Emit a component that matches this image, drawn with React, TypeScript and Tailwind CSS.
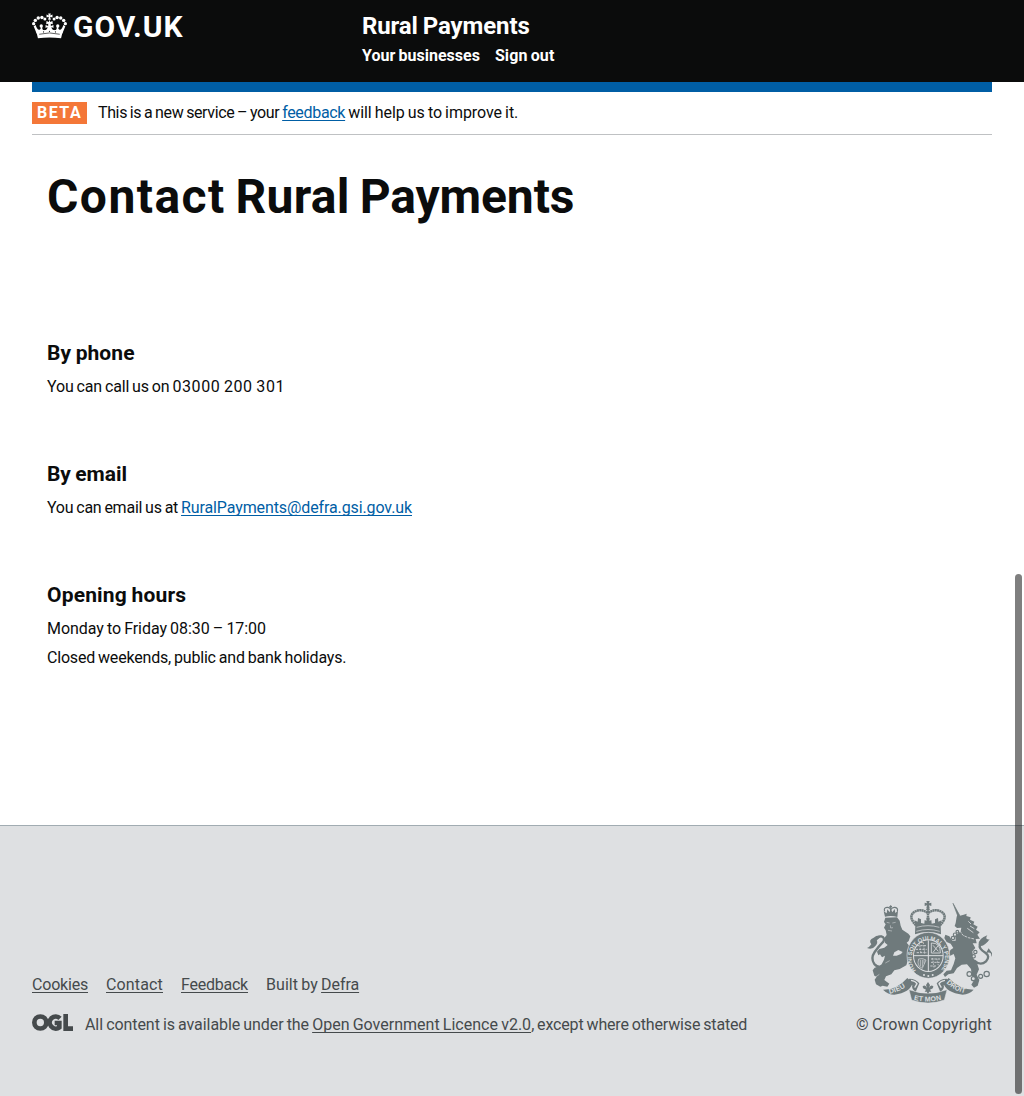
import type { ReactNode } from "react";

function Crown() {
  return (
    <svg viewBox="24 26 106 78" className="h-[26px] w-[35px] shrink-0" fill="#fff" aria-hidden="true">
      <path d="M37 82 Q77 72 117 82 L112 102 Q77 97 42 102 Z" />
      <path d="M38 88 L29 66 L35 62 Q40 78 47 76 Q53 73 49 65 L55 67 Q54 77 61 78 Q71 77 71 68 L65 71 L65 62 L73 65 L73 58 L67 60 L68 50 L75 53 L77 45 L79 53 L86 50 L87 60 L81 58 L81 65 L89 62 L89 71 L83 68 Q83 77 93 78 Q100 77 99 67 L105 65 Q101 73 107 76 Q114 78 119 62 L125 66 L116 88 Z" />
      <path d="M73 27 H81 L79 33 L86 30 V39 L79 37 L81 46 H73 L75 37 L68 39 V30 L75 33 Z" />
      <circle cx="29" cy="58" r="5" />
      <circle cx="34" cy="48" r="5.2" />
      <circle cx="43" cy="41" r="5.2" />
      <circle cx="54" cy="39" r="5.2" />
      <circle cx="63" cy="44" r="4.6" />
      <circle cx="91" cy="44" r="4.6" />
      <circle cx="100" cy="39" r="5.2" />
      <circle cx="111" cy="41" r="5.2" />
      <circle cx="120" cy="48" r="5.2" />
      <circle cx="125" cy="58" r="5" />
      <circle cx="52" cy="65" r="5" />
      <circle cx="102" cy="65" r="5" />
      <path d="M46 90 Q77 82 108 90" stroke="#0b0c0c" strokeWidth="2" fill="none" />
      <g fill="#0b0c0c">
        <circle cx="59" cy="83" r="1.8" />
        <circle cx="77" cy="81" r="1.8" />
        <circle cx="95" cy="83" r="1.8" />
      </g>
    </svg>
  );
}

function OglLogo() {
  return (
    <svg viewBox="24 147 123 51" className="h-[17px] w-[41px] shrink-0" fill="none" stroke="#454a4c" aria-hidden="true">
      <circle cx="49" cy="172.500" r="18" strokeWidth="14" />
      <path d="M108 160 A18 18 0 1 0 106 187 V174 H92" strokeWidth="14" />
      <path d="M125 147 V191 H147" strokeWidth="14" />
    </svg>
  );
}

function CoatOfArms() {
  const ink = "#6f7a7c";
  const paper = "#dee0e2";
  return (
    <svg viewBox="21 18 375 306" className="h-[102px] w-[125px] [word-spacing:0]" fill={ink} aria-hidden="true">
      {/* lion */}
      <path d="M75 65 L71 49 L80 55 L82 43 L89 52 L92 40 L97 52 L104 42 L106 54 L114 47 L112 66 Q94 61 75 65 Z" />
      <g fill="none" stroke={ink} strokeWidth="3.500">
        <path d="M74 49 Q70 38 81 37 Q90 36 92 44 Q96 36 105 37 Q115 39 112 49" />
        <path d="M92 31 V40 M88 35 H96" />
      </g>
      <path d="M76 68 L111 67 L119 77 L122 92 L127 104 L145 116 L151 124 L146 138 L140 143 L149 154 L142 166 L145 191 L139 211 L119 222 L103 226 L94 238 L78 244 L73 255 L88 266 L82 275 L68 272 L61 275 L48 268 L44 254 L50 245 L43 242 L38 226 L44 218 L57 214 L65 208 L72 194 L75 182 L66 187 L60 178 L55 181 L51 170 L58 162 L73 158 L83 150 L75 143 L73 129 L80 120 L77 106 L72 98 L77 88 L72 81 Z" />
      <path d="M76 211 Q55 222 43 207 Q31 190 44 171 Q56 154 70 140 Q76 128 64 124 Q50 123 44 141" fill="none" stroke={ink} strokeWidth="7" />
      <path d="M66 123 Q51 119 41 128 Q24 134 34 148 Q29 156 21 159 Q37 165 46 153 Q55 144 50 136 Z" />
      <g fill="none" stroke={paper} strokeWidth="1.500">
        <path d="M80 82 L89 84 M97 84 L107 82 M91 91 L92 99 L99 98 M84 106 L96 108" />
        <path d="M76 204 L89 197 M48 245 L58 238" />
      </g>
      <path d="M103 172 L115 165 L128 171 L123 177 L110 182 L99 182 Z" fill={paper} />

      {/* unicorn */}
      <path d="M279 25 L299 61 L294 65 Z" stroke={ink} strokeWidth="2" />
      <path d="M290 65 L294 56 L300 62 L311 59 L320 56 L319 63 L332 67 L330 74 L343 80 L340 88 L353 95 L348 104 L359 112 L352 119 L360 131 L347 132 L350 145 L338 145 L346 159 L337 169 L340 190 L351 204 L357 223 L350 239 L358 255 L353 272 L342 278 L334 269 L342 256 L335 240 L333 222 L321 208 L305 209 L291 219 L281 235 L265 238 L255 246 L250 238 L260 227 L273 226 L281 207 L286 190 L281 177 L271 182 L265 176 L272 164 L280 159 L272 146 L260 141 L253 129 L256 119 L268 124 L277 137 L287 137 L286 122 L302 109 L304 98 L291 99 L284 93 L287 84 Z" />
      <path d="M342 196 Q361 214 378 199 Q392 184 376 173 Q355 160 360 149 Q365 139 382 136" fill="none" stroke={ink} strokeWidth="7" />
      <path d="M356 151 Q354 131 382 121 Q373 135 389 133 Q375 152 363 153 Z M378 174 Q396 168 394 186 L398 177 L386 160 Z" />
      <g fill="none" stroke={paper} strokeWidth="2.500">
        <path d="M299 107 L309 121 L325 128 L343 132" strokeDasharray="8 3" />
        <path d="M330 93 L343 101 M322 100 L340 113 M325 79 L333 87" />
      </g>
      <g fill={paper} stroke={ink} strokeWidth="3.500">
        <circle cx="285" cy="119" r="5" />
        <circle cx="279" cy="129" r="5" />
        <circle cx="292" cy="110" r="4" />
        <circle cx="346" cy="171" r="5" />
        <circle cx="341" cy="184" r="5" />
        <circle cx="328" cy="237" r="7" />
        <circle cx="340" cy="251" r="6" />
        <circle cx="362" cy="244" r="6" />
        <circle cx="380" cy="237" r="8" />
      </g>

      {/* royal crown */}
      <path d="M199 18 H209 L207 25 L214 23 V33 L207 31 L209 40 H199 L201 31 L194 33 V23 L201 25 Z" />
      <circle cx="204" cy="43" r="5" />
      <g fill="none" stroke={ink} strokeWidth="7.500" strokeDasharray="6 1">
        <path d="M168 91 Q145 67 160 53 Q180 38 202 53" />
        <path d="M240 91 Q263 67 248 53 Q228 38 206 53" />
        <path d="M204 48 V84" />
      </g>
      <path d="M166 90 L163 76 L173 80 L174 69 L183 73 L183 84 L193 86 L194 75 L200 78 L199 68 H209 L208 78 L214 75 L215 86 L225 84 L225 73 L234 69 L235 80 L245 76 L242 90 L243 118 Q204 104 165 118 Z" />
      <g fill="none" stroke={paper} strokeWidth="2">
        <path d="M170 97 Q204 87 238 97 M169 109 Q204 98 239 109" />
      </g>

      {/* garter and shield */}
      <ellipse cx="205" cy="181" rx="64" ry="69" stroke={paper} strokeWidth="2" />
      <ellipse cx="205" cy="182" rx="46" ry="49" fill={paper} />
      <ellipse cx="205" cy="182" rx="43" ry="46" />
      <g fill="none" stroke={paper}>
        <path d="M205 136 V230 M161 182 H249" strokeWidth="3" />
        <path d="M171 152 H200 M167 163 H200 M170 173 H201 M213 192 H241 M213 202 H239 M211 213 H231" strokeWidth="2.500" strokeDasharray="7 3" />
        <path d="M178 144 L183 174 M190 142 L194 176 M218 189 L222 218 M230 191 L235 211" strokeWidth="2" strokeDasharray="5 3" />
        <path d="M214 144 Q242 143 241 174 H214 Z M219 151 L235 169 M235 151 L220 171" strokeWidth="2.500" />
        <path d="M176 192 Q169 213 187 220 L198 195 Q188 188 176 192 M181 195 V214 M187 194 V216 M192 195 V206" strokeWidth="2" />
      </g>
      <path id="garter-text" d="M168 226 A50 54 0 1 1 242 226" fill="none" />
      <text fill={paper} className="font-['Liberation_Sans'] text-[18px] font-bold">
        <textPath href="#garter-text" textLength="240" lengthAdjust="spacingAndGlyphs">HONI SOIT QUI MAL Y PENSE</textPath>
      </text>
      <g fill={paper}>
        <circle cx="192" cy="240" r="3" />
        <circle cx="205" cy="243" r="3" />
        <circle cx="218" cy="240" r="3" />
      </g>

      {/* motto ribbon */}
      <path d="M148 251 Q168 251 178 265 L167 291 Q153 280 157 270 L143 262 Z M260 251 Q240 251 230 265 L241 291 Q255 280 251 270 L265 262 Z" />
      <path d="M153 256 Q166 258 171 266 L164 278 M255 256 Q242 258 237 266 L244 278" fill="none" stroke={paper} strokeWidth="4" />
      <path d="M69 284 Q111 285 142 249 L158 264 Q150 293 103 299 Q84 299 69 284 Z" />
      <path d="M341 284 Q297 283 266 249 L250 264 Q258 293 308 299 Q328 298 341 284 Z" />
      <path d="M147 284 Q204 306 261 284 L253 315 Q204 333 155 315 Z" stroke={paper} strokeWidth="1.500" />
      <path d="M204 261 L210 270 L207 279 Q212 267 220 274 Q220 282 210 284 L214 290 L208 290 L204 297 L200 290 L194 290 L198 284 Q188 282 188 274 Q196 267 201 279 L198 270 Z" />
      <path id="ribbon-left" d="M88 296 Q126 289 151 264" fill="none" />
      <path id="ribbon-mid" d="M161 314 Q204 325 250 313" fill="none" />
      <path id="ribbon-right" d="M259 264 Q284 290 326 297" fill="none" />
      <g fill={paper} className="font-['Liberation_Sans'] text-[21px] font-bold">
        <text>
          <textPath href="#ribbon-left" textLength="53">DIEU</textPath>
        </text>
        <text>
          <textPath href="#ribbon-mid" textLength="84">ET MON</textPath>
        </text>
        <text>
          <textPath href="#ribbon-right" textLength="64" lengthAdjust="spacingAndGlyphs">DROIT</textPath>
        </text>
      </g>
    </svg>
  );
}

function Link({ children, className = "" }: { children: ReactNode; className?: string }) {
  return (
    <a href="#" className={`underline decoration-1 underline-offset-2 [text-decoration-skip-ink:none] ${className}`}>
      {children}
    </a>
  );
}

function Section({ title, titleClass, children }: { title: string; titleClass: string; children: ReactNode }) {
  return (
    <section className="mb-[61px]">
      <h2 className={`mb-2 text-[21px] leading-7 font-bold ${titleClass}`}>{title}</h2>
      <div className="flex flex-col gap-[5px]">{children}</div>
    </section>
  );
}

export default function App() {
  return (
    <div className="flex h-[1096px] w-full flex-col bg-white font-[Roboto,sans-serif] text-base leading-6 text-[#0b0c0c] [word-spacing:-0.8px]">
      <header className="flex h-[82px] shrink-0 bg-[#0b0c0c] px-8 font-bold text-white">
        <div className="flex w-[330px] items-start gap-[6px] pt-[13px]">
          <Crown />
          <span className="text-[30px] leading-7 tracking-[0.950px]">GOV.UK</span>
        </div>
        <div className="pt-[11px]">
          <div className="text-2xl leading-[30px] tracking-[-0.120px]">Rural Payments</div>
          <nav className="mt-[3px] flex gap-[15px]">
            <a href="#" className="tracking-[0.010px]">Your businesses</a>
            <a href="#" className="tracking-[0.090px]">Sign out</a>
          </nav>
        </div>
      </header>

      <div className="mx-8 shrink-0">
        <div className="h-[10px] bg-[#005ea5]" />
        <div className="flex h-[43px] items-start border-b border-[#bfc1c3] pt-[10px]">
          <strong className="mr-[11px] h-[22px] w-[55px] bg-[#f47738] pl-[5px] leading-[21px] tracking-[1.500px] text-white">BETA</strong>
          <p className="-mt-[1px] whitespace-pre">
            <span className="tracking-[-0.375px]">This is a new service – your </span>
            <Link className="tracking-[-0.320px] text-[#005ea5]">feedback</Link>
            <span className="tracking-[-0.060px]"> will help us to improve it.</span>
          </p>
        </div>
      </div>

      <main className="flex-1 px-[47px] pt-[37px]">
        <h1 className="mb-[117px] text-5xl leading-[50px] font-bold tracking-[-0.100px] [word-spacing:-2px]">
          <span className="tracking-[1.450px]">Contact</span> <span className="tracking-[0.280px]">Rural</span> Payments
        </h1>
        <Section title="By phone" titleClass="tracking-[0.080px]">
          <p>
            <span className="tracking-[-0.170px]">You can call us on </span>
            <span className="tracking-[0.560px]">03000 200 301</span>
          </p>
        </Section>
        <Section title="By email" titleClass="tracking-[-0.030px]">
          <p className="whitespace-pre">
            <span className="tracking-[-0.240px]">You can email us at </span>
            <Link className="tracking-[-0.110px] text-[#005ea5]">RuralPayments@defra.gsi.gov.uk</Link>
          </p>
        </Section>
        <Section title="Opening hours" titleClass="tracking-[0.170px]">
          <p className="tracking-[-0.050px]">Monday to Friday 08:30 – 17:00</p>
          <p className="tracking-[-0.190px]">Closed weekends, public and bank holidays.</p>
        </Section>
      </main>

      <footer className="flex h-[271px] shrink-0 justify-between border-t border-[#a1acb2] bg-[#dee0e2] px-8 pt-[75px] text-[#454a4c]">
        <div className="pt-[72px]">
          <nav className="flex gap-[18px]">
            <Link className="tracking-[-0.200px]">Cookies</Link>
            <Link className="tracking-[0.150px]">Contact</Link>
            <Link className="tracking-[-0.230px]">Feedback</Link>
            <span className="whitespace-pre">
              <span className="tracking-[0.050px]">Built by </span>
              <Link className="tracking-[-0.070px]">Defra</Link>
            </span>
          </nav>
          <div className="mt-4 flex items-start gap-3">
            <div className="pt-[1px]">
              <OglLogo />
            </div>
            <p className="whitespace-pre">
              <span className="tracking-[-0.065px]">All content is available under the </span>
              <Link className="tracking-[0.010px]">Open Government Licence v2.0</Link>
              <span className="tracking-[-0.160px]">, except where otherwise stated</span>
            </p>
          </div>
        </div>
        <div className="flex flex-col items-end gap-[10px]">
          <CoatOfArms />
          <p className="tracking-[0.180px]">© Crown Copyright</p>
        </div>
      </footer>

      <div className="fixed top-[574px] right-[2px] h-[520px] w-[7px] rounded-full bg-black/50" />
    </div>
  );
}
